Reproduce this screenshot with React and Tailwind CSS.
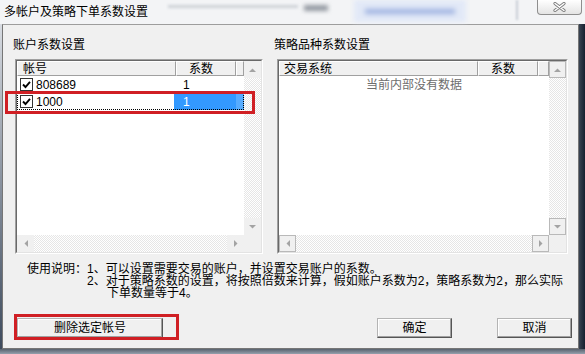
import React from "react";

const font = "font-['Liberation_Sans','Noto_Sans_CJK_SC',sans-serif]";
const track =
  "bg-[image:repeating-conic-gradient(#e6e6e6_0%_25%,#ffffff_0%_50%)] bg-size-[2px_2px]";

function Arrow({ dir }) {
  const pts = {
    up: "0,4 3.5,0.5 7,4",
    down: "0,0 7,0 3.5,3.5",
    left: "4,0 4,7 0.5,3.5",
    right: "0,0 0,7 3.5,3.5",
  }[dir];
  const vertical = dir === "up" || dir === "down";
  return (
    <svg width={vertical ? 7 : 4} height={vertical ? 4 : 7} viewBox={vertical ? "0 0 7 4" : "0 0 4 7"}>
      <polygon points={pts} fill="#a3a3a3" />
    </svg>
  );
}

function SBtn({ dir, bordered, className = "" }) {
  return (
    <div
      className={`flex items-center justify-center bg-[#f0f0f0] ${
        bordered ? "border border-[#b9b9b9]" : ""
      } ${className}`}
    >
      <Arrow dir={dir} />
    </div>
  );
}

function Check() {
  return (
    <div className="w-[13px] h-[13px] border border-[#333] bg-white flex items-center justify-center shrink-0">
      <svg width="9" height="9" viewBox="0 0 9 9">
        <path d="M1 4.5 L3.5 7 L8 1.8" stroke="#000" strokeWidth="1.9" fill="none" />
      </svg>
    </div>
  );
}

function HeadCell({ w, children, grow }) {
  return (
    <div
      className={`${grow ? "flex-1" : ""} h-[15px] flex items-center bg-[#f0f0f0] border-t border-l border-t-white border-l-white border-r border-b border-r-[#a0a0a0] border-b-[#a0a0a0] whitespace-nowrap`}
      style={w ? { width: w } : undefined}
    >
      {children}
    </div>
  );
}

function ListBox({ width, bordered, children }) {
  return (
    <div
      className="h-[195px] flex border border-t-[#a0a0a0] border-l-[#a0a0a0] border-r-white border-b-white"
      style={{ width }}
    >
      <div className="flex-1 border border-t-[#696969] border-l-[#696969] border-r-[#e3e3e3] border-b-[#e3e3e3] bg-white grid grid-cols-[1fr_17px] grid-rows-[1fr_17px] overflow-hidden">
        <div className="flex flex-col overflow-hidden">{children}</div>
        <div className="flex flex-col">
          <SBtn dir="up" bordered={bordered} className="h-[17px]" />
          <div className={`flex-1 ${track}`} />
          <SBtn dir="down" bordered={bordered} className="h-[17px]" />
        </div>
        <div className="flex">
          <SBtn dir="left" bordered={bordered} className="w-[17px]" />
          <div className={`flex-1 ${track}`} />
          <SBtn dir="right" bordered={bordered} className="w-[17px]" />
        </div>
        <div className="bg-[#f0f0f0]" />
      </div>
    </div>
  );
}

function Button({ w, children }) {
  return (
    <div
      className="h-[20px] flex items-center justify-center bg-[#f0f0f0] border border-t-[#b4b4b4] border-l-[#b4b4b4] border-r-[#555] border-b-[#555] shadow-[inset_-1px_-1px_#a0a0a0,inset_1px_1px_#ffffff]"
      style={{ width: w }}
    >
      {children}
    </div>
  );
}

export default function App() {
  return (
    <div
      className={`w-[585px] h-[354px] relative overflow-hidden bg-[#dfe3e8] ${font} text-[12px] leading-[12px] text-black`}
    >
      {/* title bar */}
      <div className="h-[24px] flex items-center bg-[#f3f4f6]">
        <span className="ml-[4px] whitespace-nowrap">多帐户及策略下单系数设置</span>
        <div className="ml-[20px] w-[130px] h-[3px] bg-[#cdd1d7] blur-[1.5px] self-start mt-[5px]" />
        <div className="ml-[6px] w-[24px] h-[6px] bg-[#949aa2] blur-[2px] self-start mt-[5px]" />
        <div className="ml-[26px] w-[112px] h-[22px] bg-[#e2e9f7] blur-[2px] self-start flex items-center justify-center">
          <div className="w-[90px] h-[5px] bg-[#9db1e0] blur-[1.5px]" />
        </div>
        <div className="ml-[50px] w-[2px] h-[20px] bg-[#c9ced6] blur-[1px] self-start" />
        <div className="ml-auto mr-[3px] self-start w-[45px] h-[15px] rounded-b-[4px] border border-t-0 border-[#8e8e8e] bg-gradient-to-b from-[#ffffff] to-[#e4e4e4] flex items-center justify-center">
          <svg width="13" height="10" viewBox="0 0 13 10">
            <path d="M2 1.5 L11 8.5 M11 1.5 L2 8.5" stroke="#7d7d7d" strokeWidth="3.2" strokeLinecap="round" />
            <path d="M2 1.5 L11 8.5 M11 1.5 L2 8.5" stroke="#ffffff" strokeWidth="1.4" strokeLinecap="round" />
          </svg>
        </div>
      </div>

      <div className="flex h-[325px]">
        <div className="w-[2px] bg-gradient-to-b from-[#d8dce2] to-[#3e4b5d]" />
        <div className="flex-1 bg-[#f0f0f0] border border-[#767676] border-t-[#9d9d9d] flex flex-col">
          {/* panels */}
          <div className="flex mt-[14px]">
            <div className="ml-[10px] flex flex-col">
              <div className="h-[12px] whitespace-nowrap">账户系数设置</div>
              <div className="ml-[2px] mt-[8px]">
                <ListBox width={248}>
                  <div className="flex">
                    <HeadCell w={159}>
                      <span className="pl-[5px]">帐号</span>
                    </HeadCell>
                    <HeadCell w={60}>
                      <span className="pl-[12px]">系数</span>
                    </HeadCell>
                    <HeadCell grow />
                  </div>
                  <div className="h-[17px] flex items-center">
                    <div className="w-[157px] flex items-center pl-[3px]">
                      <Check />
                      <span className="ml-[3px]">808689</span>
                    </div>
                    <span className="pl-[9px]">1</span>
                  </div>
                  <div className="h-[17px] flex items-stretch outline-1 outline-dotted outline-black -outline-offset-1">
                    <div className="w-[157px] flex items-center pl-[3px] bg-white">
                      <Check />
                      <span className="ml-[3px]">1000</span>
                    </div>
                    <div className="w-[62px] flex items-center pl-[9px] bg-[#3399ff] text-white">1</div>
                    <div className="flex-1 bg-[#57acff]" />
                  </div>
                </ListBox>
              </div>
            </div>
            <div className="ml-[11px] flex flex-col">
              <div className="h-[12px] whitespace-nowrap">策略品种系数设置</div>
              <div className="ml-[3px] mt-[8px]">
                <ListBox width={291} bordered>
                  <div className="flex">
                    <HeadCell w={199}>
                      <span className="pl-[4px]">交易系统</span>
                    </HeadCell>
                    <HeadCell w={60}>
                      <span className="pl-[12px]">系数</span>
                    </HeadCell>
                    <HeadCell grow />
                  </div>
                  <div className="h-[17px] flex items-center justify-center text-[#6d6d6d]">
                    当前内部没有数据
                  </div>
                </ListBox>
              </div>
            </div>
          </div>

          {/* instructions */}
          <div className="mt-[9px] ml-[24px] flex whitespace-nowrap">
            <div className="w-[60px]">使用说明：</div>
            <div className="flex flex-col">
              <div className="h-[12px]">1、可以设置需要交易的账户，并设置交易账户的系数。</div>
              <div className="h-[12px]">
                2、对于策略系数的设置，将按照倍数来计算，假如账户系数为2，策略系数为2，那么实际
              </div>
              <div className="h-[12px] pl-[20px]">下单数量等于4。</div>
            </div>
          </div>

          {/* buttons */}
          <div className="mt-[19px] flex">
            <div className="ml-[14px]">
              <Button w={146}>删除选定帐号</Button>
            </div>
            <div className="ml-auto mr-[6px] flex gap-[45px]">
              <Button w={75}>确定</Button>
              <Button w={75}>取消</Button>
            </div>
          </div>
        </div>
        <div className="w-[6px] bg-gradient-to-r from-[#3a4452] to-[#162030]" />
      </div>
      <div className="h-[5px] bg-gradient-to-b from-[#59626e] to-[#95a0ad]" />

      {/* red annotation boxes */}
      <div className="absolute left-[5px] top-[91px] w-[250px] h-[23px] border-[3px] border-[#d01f24]" />
      <div className="absolute left-[14px] top-[314px] w-[165px] h-[26px] border-[3px] border-[#d01f24]" />
    </div>
  );
}
